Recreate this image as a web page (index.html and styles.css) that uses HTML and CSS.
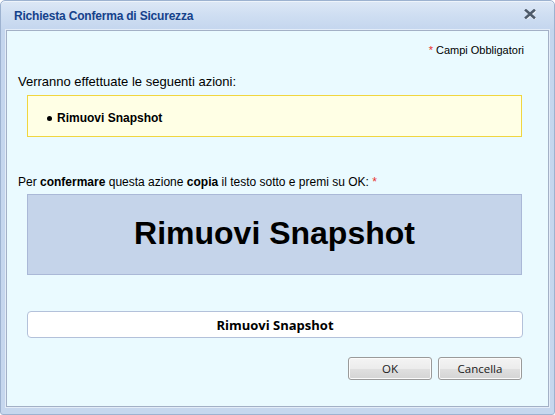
FILE: index.html
```html
<!DOCTYPE html>
<html lang="it">
<head>
<meta charset="utf-8">
<title>Richiesta Conferma di Sicurezza</title>
<link rel="stylesheet" href="styles.css">
</head>
<body>
<div class="window">
  <div class="titlebar">
    <span class="title">Richiesta Conferma di Sicurezza</span>
    <span class="close" aria-label="Chiudi">
      <svg width="12" height="10" viewBox="0 0 12 10">
        <path d="M2 1.5 L10 8.5 M10 1.5 L2 8.5" stroke="#ffffff" stroke-width="3" stroke-linecap="square" transform="translate(0.6,0.8)" opacity="0.7"/>
        <path d="M2 1.5 L10 8.5 M10 1.5 L2 8.5" stroke="#4e5a6a" stroke-width="2.6" stroke-linecap="square"/>
      </svg>
    </span>
  </div>
  <div class="body">
    <div class="required"><span class="star">*</span> Campi Obbligatori</div>
    <div class="intro">Verranno effettuate le seguenti azioni:</div>
    <div class="actions">
      <div class="action"><span class="dot"></span>Rimuovi Snapshot</div>
    </div>
    <div class="confirm-label">Per <b>confermare</b> questa azione <b>copia</b> il testo sotto e premi su OK: <span class="star">*</span></div>
    <div class="phrase">Rimuovi Snapshot</div>
    <input class="field" type="text" value="Rimuovi Snapshot">
    <div class="buttons">
      <button class="btn" type="button">OK</button>
      <button class="btn" type="button">Cancella</button>
    </div>
  </div>
</div>
</body>
</html>
```
FILE: styles.css
```css
html, body {
  margin: 0;
  padding: 0;
  background: #ffffff;
}

.window {
  box-sizing: border-box;
  width: 555px;
  height: 415px;
  border: 1px solid #9db2d0;
  border-radius: 5px 5px 3px 3px;
  background: linear-gradient(#dde8f6 0px, #cfdef2 14px, #c4d6ee 29px, #c6d7ee 100%);
  box-shadow: inset 0 1px 0 #eef4fb;
  padding: 0 5px 7px 5px;
  display: flex;
  flex-direction: column;
  font-family: "Liberation Sans", Arial, sans-serif;
}

.titlebar {
  height: 29px;
  display: flex;
  align-items: center;
  justify-content: space-between;
  padding: 1px 0 0 8px;
  box-sizing: border-box;
}

.title {
  font-size: 12px;
  font-weight: bold;
  letter-spacing: -0.2px;
  color: #15428b;
}

.close {
  display: flex;
  width: 12px;
  height: 10px;
  margin-right: 13px;
  margin-top: -4px;
}

.body {
  flex: 1;
  border: 1px solid #a3b0c6;
  box-shadow: 0 0 0 1px #e3ecf8;
  background: #eafaff;
  display: flex;
  flex-direction: column;
  color: #000;
}

.required {
  align-self: flex-end;
  margin: 12px 24px 0 0;
  font-size: 11px;
  line-height: 14px;
  color: #000;
}

.star {
  color: #e8322e;
}

.intro {
  margin: 17px 0 0 11px;
  font-size: 13px;
  line-height: 16px;
}

.actions {
  margin: 5px 26px 0 20px;
  height: 40px;
  border: 1px solid #f0d640;
  background: #ffffe5;
  box-sizing: content-box;
}

.action {
  display: flex;
  align-items: center;
  margin: 15px 0 0 19px;
  font-size: 12px;
  font-weight: bold;
  line-height: 15px;
}

.dot {
  width: 5px;
  height: 5px;
  border-radius: 50%;
  background: #000;
  margin-right: 5px;
}

.confirm-label {
  margin: 38px 0 0 11px;
  font-size: 12px;
  line-height: 15px;
}

.phrase {
  margin: 4px 26px 0 20px;
  height: 81px;
  border: 1px solid #aab8d7;
  background: #c5d4ea;
  display: flex;
  align-items: center;
  justify-content: center;
  font-size: 32px;
  font-weight: bold;
  padding-bottom: 2px;
  box-sizing: border-box;
}

.field {
  margin: 36px 25px 0 20px;
  height: 27px;
  box-sizing: border-box;
  border: 1px solid #b3c1da;
  border-radius: 4px;
  background: #ffffff;
  text-align: center;
  font-family: "Open Sans", sans-serif;
  font-size: 13px;
  font-weight: bold;
  color: #000;
  padding: 0 4px;
  outline: none;
}

.buttons {
  display: flex;
  justify-content: flex-end;
  gap: 6px;
  margin: 19px 26px 0 0;
}

.btn {
  width: 84px;
  height: 23px;
  box-sizing: border-box;
  border: 1px solid #9a9a9a;
  border-radius: 3px;
  background: linear-gradient(#f4f4f4 0%, #ececec 50%, #e0e0e0 51%, #d4d4d4 100%);
  box-shadow: inset 0 0 0 1px #fbfbfb;
  font-family: "Open Sans", sans-serif;
  font-size: 11.5px;
  color: #1a1a1a;
  padding: 0;
  line-height: 20px;
}
```
